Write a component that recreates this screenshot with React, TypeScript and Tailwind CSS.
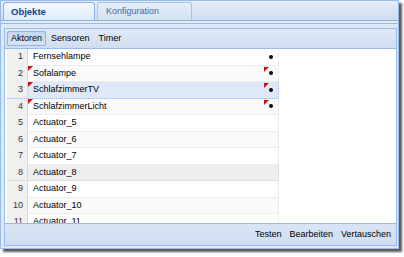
import React from "react";

type Row = { id: number; name: string; dirty?: boolean; selected?: boolean; over?: boolean };

const rows: Row[] = [
  { id: 1, name: "Fernsehlampe" },
  { id: 2, name: "Sofalampe", dirty: true },
  { id: 3, name: "SchlafzimmerTV", dirty: true, selected: true },
  { id: 4, name: "SchlafzimmerLicht", dirty: true },
  { id: 5, name: "Actuator_5" },
  { id: 6, name: "Actuator_6" },
  { id: 7, name: "Actuator_7" },
  { id: 8, name: "Actuator_8", over: true },
  { id: 9, name: "Actuator_9" },
  { id: 10, name: "Actuator_10" },
  { id: 11, name: "Actuator_11" },
];

function DirtyMark() {
  return (
    <span className="absolute left-0 top-0 h-0 w-0 border-t-[5px] border-r-[5px] border-t-[#d01010] border-r-transparent" />
  );
}

function GridRow({ row, index }: { row: Row; index: number }) {
  const stripe = index % 2 === 1;
  const bg = row.selected
    ? "bg-[#dfe8f6] border-[#a3bae9] border-dotted"
    : row.over
      ? "bg-[#efefef] border-[#dddddd]"
      : stripe
        ? "bg-[#fafafa] border-[#ededed]"
        : "bg-white border-[#ededed]";
  return (
    <div className={`flex h-[16.5px] w-[272px] shrink-0 border-b border-r ${bg}`}>
      <div className="flex w-[21px] items-center justify-end border-r border-[#d8d8d8] bg-[#f0f0f0] pr-[4px] text-[#333]">
        {row.id}
      </div>
      <div className="relative flex w-[234px] items-center pl-[5px] text-black">
        {row.dirty && <DirtyMark />}
        {row.name}
      </div>
      <div className="relative flex flex-1 items-center justify-end pr-[5px]">
        {row.dirty && (
          <span className="absolute left-[2px] top-[1px] h-0 w-0 border-t-[5px] border-r-[5px] border-t-[#d01010] border-r-transparent" />
        )}
        {index < 4 && <span className="h-[4px] w-[4px] rounded-full bg-black" />}
      </div>
    </div>
  );
}

export default function App() {
  return (
    <div
      className="h-[257px] w-[404px] bg-white text-[9px] leading-none"
      style={{ fontFamily: '"Liberation Sans", Arial, sans-serif' }}
    >
      <div className="flex h-[249px] w-[399px] flex-col border border-[#99bbe8] bg-[#dfe8f6] shadow-[3px_3px_2px_rgba(0,0,0,0.65)]">
        {/* Tab strip */}
        <div className="flex h-[20px] items-end gap-[2px] border-b border-[#8db2e3] bg-gradient-to-b from-[#e4ecf7] to-[#d0ddef] px-[2px]">
          <div className="flex h-[18px] w-[92px] items-center rounded-t-[3px] border border-b-0 border-[#8db2e3] bg-gradient-to-b from-[#f4f8fd] to-[#deebfa] pl-[7px] text-[9.5px] font-bold text-[#15428b]">
            Objekte
          </div>
          <div className="flex h-[18px] w-[95px] items-center rounded-t-[3px] border border-b-0 border-[#a9c3e6] bg-gradient-to-b from-[#e6eef8] to-[#d5e2f3] pl-[8px] text-[#416aa3]">
            Konfiguration
          </div>
        </div>
        <div className="h-[3px] border-b border-[#99bbe8] bg-[#deecfd]" />

        {/* Body */}
        <div className="flex flex-1 flex-col pl-[3px] pr-[1px] pt-[4px] pb-[2px]">
          <div className="flex flex-1 flex-col border border-[#99bbe8] bg-white">
            {/* Top toolbar */}
            <div className="flex h-[20px] items-center gap-[1px] border-b border-[#99bbe8] bg-gradient-to-b from-[#dfe8f5] to-[#d0def1] px-[2px]">
              <div className="flex h-[15px] items-center rounded-[2px] border border-[#8db2e3] bg-gradient-to-b from-[#c6d7ee] to-[#d8e4f4] px-[3px] text-black">
                Aktoren
              </div>
              <div className="flex h-[15px] items-center px-[4px] text-black">Sensoren</div>
              <div className="flex h-[15px] items-center px-[4px] text-black">Timer</div>
            </div>

            {/* Grid */}
            <div className="flex h-[174px] flex-col overflow-hidden bg-white pl-[2px]">
              {rows.map((r, i) => (
                <GridRow key={r.id} row={r} index={i} />
              ))}
            </div>

            {/* Bottom toolbar */}
            <div className="flex flex-1 items-center justify-end gap-[2px] border-t border-[#99bbe8] bg-gradient-to-b from-[#d9e5f5] to-[#d0def1] pr-[2px] text-black">
              <span className="px-[3px]">Testen</span>
              <span className="px-[3px]">Bearbeiten</span>
              <span className="px-[3px]">Vertauschen</span>
            </div>
          </div>
        </div>
      </div>
    </div>
  );
}
